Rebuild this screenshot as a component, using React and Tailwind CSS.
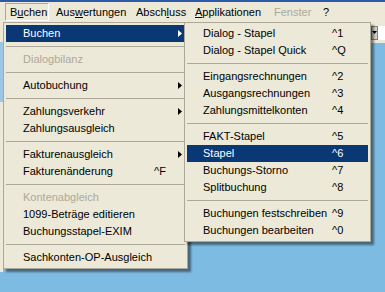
import React from "react";

const font = { fontFamily: '"Liberation Sans", Arial, sans-serif' };

function Arrow({ white }) {
  return (
    <svg width="4" height="7" viewBox="0 0 4 7" className="ml-auto mr-[3px]">
      <path d="M0 0 L4 3.5 L0 7 Z" fill={white ? "#ffffff" : "#000000"} />
    </svg>
  );
}

function Row({ label, shortcut, arrow, disabled, active, sub }) {
  const color = active
    ? "bg-[#0a3875] text-white"
    : disabled
    ? "text-[#aca899]"
    : "text-black";
  return (
    <div className={`flex items-center h-[17px] ${color}`}>
      <span
        className={
          sub
            ? "pl-[16px] w-[145px] shrink-0 whitespace-nowrap"
            : "pl-[17px] w-[148px] shrink-0 whitespace-nowrap"
        }
      >
        {label}
      </span>
      {shortcut && <span className="whitespace-nowrap">{shortcut}</span>}
      {arrow && <Arrow white={active} />}
    </div>
  );
}

function Sep() {
  return (
    <div className="h-[9px] flex items-center">
      <div className="h-px w-full bg-[#aca899]" />
    </div>
  );
}

export default function App() {
  return (
    <div
      className="relative w-[385px] h-[292px] overflow-hidden bg-[#7dbbe3] text-[11px] leading-none"
      style={font}
    >
      {/* title bar remnant */}
      <div className="h-[2px] bg-[#2b5aa8]" />
      {/* menu bar */}
      <div className="h-[20px] bg-[#ece9d8] flex items-stretch pl-[5px]">
        <div className="w-[44px] mt-[1px] mb-[1px] flex items-center pl-[4px] border border-t-[#aca899] border-l-[#aca899] border-b-white border-r-white text-black">
          B<span className="underline">u</span>chen
        </div>
        <div className="w-[82px] flex items-center pl-[7px] text-black">
          Aus<span className="underline">w</span>ertungen
        </div>
        <div className="w-[59px] flex items-center pl-[5px] text-black">
          Absch<span className="underline">l</span>uss
        </div>
        <div className="w-[79px] flex items-center pl-[5px] text-black">
          <span className="underline">A</span>pplikationen
        </div>
        <div className="w-[49px] flex items-center pl-[5px] text-[#aca899]">
          Fenster
        </div>
        <div className="w-[30px] flex items-center pl-[5px] text-black">?</div>
      </div>

      {/* underlying window content */}
      <div className="flex">
        <div className="w-[3px] flex flex-col">
          <div className="h-[20px] bg-[#ece9d8]" />
          <div className="h-[60px] bg-[#9cc6e4]" />
          <div className="h-[170px] bg-[#ece9d8]" />
        </div>
        <div className="flex-1" />
        <div className="w-[14px] flex flex-col">
          <div className="h-[21px] bg-[#ece9d8] flex items-center">
            <div className="w-[7px] h-[14px] bg-[#d4d0c8] border border-[#808080] flex items-center justify-center">
              <svg width="5" height="3" viewBox="0 0 5 3">
                <path d="M0 0 L5 0 L2.5 3 Z" fill="#000" />
              </svg>
            </div>
            <div className="flex-1 h-[14px] bg-white" />
          </div>
        </div>
      </div>

      {/* first dropdown */}
      <div className="absolute left-[3px] top-[22px] w-[185px] bg-[#ece9d8] border border-[#aca899] p-[2px] shadow-[3px_3px_2px_rgba(0,0,0,0.45)]">
        <Row label="Buchen" arrow active />
        <Sep />
        <Row label="Dialogbilanz" disabled />
        <Sep />
        <Row label="Autobuchung" arrow />
        <Sep />
        <Row label="Zahlungsverkehr" arrow />
        <Row label="Zahlungsausgleich" />
        <Sep />
        <Row label="Fakturenausgleich" arrow />
        <Row label="Fakturenänderung" shortcut="^F" />
        <Sep />
        <Row label="Kontenabgleich" disabled />
        <Row label="1099-Beträge editieren" />
        <Row label="Buchungsstapel-EXIM" />
        <Sep />
        <Row label="Sachkonten-OP-Ausgleich" />
      </div>

      {/* submenu */}
      <div className="absolute left-[184px] top-[22px] w-[187px] bg-[#ece9d8] border border-[#aca899] p-[2px] shadow-[3px_3px_2px_rgba(0,0,0,0.45)]">
        <Row sub label="Dialog - Stapel" shortcut="^1" />
        <Row sub label="Dialog - Stapel Quick" shortcut="^Q" />
        <Sep />
        <Row sub label="Eingangsrechnungen" shortcut="^2" />
        <Row sub label="Ausgangsrechnungen" shortcut="^3" />
        <Row sub label="Zahlungsmittelkonten" shortcut="^4" />
        <Sep />
        <Row sub label="FAKT-Stapel" shortcut="^5" />
        <Row sub label="Stapel" shortcut="^6" active />
        <Row sub label="Buchungs-Storno" shortcut="^7" />
        <Row sub label="Splitbuchung" shortcut="^8" />
        <Sep />
        <Row sub label="Buchungen festschreiben" shortcut="^9" />
        <Row sub label="Buchungen bearbeiten" shortcut="^0" />
      </div>
    </div>
  );
}
